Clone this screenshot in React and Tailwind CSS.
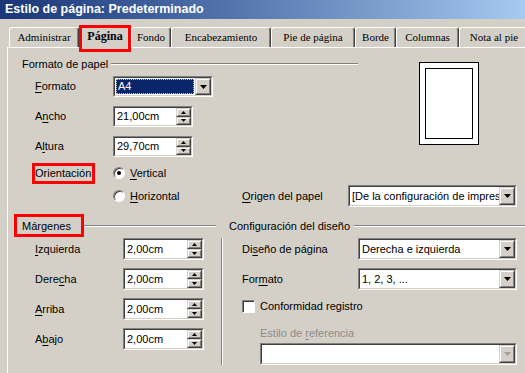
import React from 'react';

const tabs = [
  { label: 'Administrar', w: 70 },
  { label: 'Página', w: 52, active: true },
  { label: 'Fondo', w: 40 },
  { label: 'Encabezamiento', w: 100 },
  { label: 'Pie de página', w: 84 },
  { label: 'Borde', w: 41 },
  { label: 'Columnas', w: 63 },
  { label: 'Nota al pie', w: 70 },
];

// sunken win2000 field
function Sunken({ className = '', children }) {
  return (
    <div className={`border border-t-[#808080] border-l-[#808080] border-b-white border-r-white ${className}`}>
      <div className="flex h-full w-full border border-t-[#404040] border-l-[#404040] border-b-[#d4d0c8] border-r-[#d4d0c8] bg-white">
        {children}
      </div>
    </div>
  );
}

function Raised({ className = '', children }) {
  return (
    <div className={`border border-t-[#d4d0c8] border-l-[#d4d0c8] border-b-[#404040] border-r-[#404040] ${className}`}>
      <div className="flex h-full w-full items-center justify-center border border-t-white border-l-white border-b-[#808080] border-r-[#808080] bg-[#d4d0c8]">
        {children}
      </div>
    </div>
  );
}

function Arrow({ disabled }) {
  return (
    <Raised className="h-full w-[16px] shrink-0">
      <svg width="7" height="4" viewBox="0 0 7 4">
        <path d="M0 0h7L3.5 4z" fill={disabled ? '#a0a0a0' : '#000'} />
      </svg>
    </Raised>
  );
}

function Spin({ value, className = '' }) {
  return (
    <Sunken className={className}>
      <div className="flex flex-1 items-center pl-[2px]">{value}</div>
      <div className="flex w-[15px] shrink-0 flex-col">
        <Raised className="flex-1">
          <svg width="5" height="3" viewBox="0 0 5 3"><path d="M2.5 0L5 3H0z" fill="#000" /></svg>
        </Raised>
        <Raised className="flex-1">
          <svg width="5" height="3" viewBox="0 0 5 3"><path d="M0 0h5L2.5 3z" fill="#000" /></svg>
        </Raised>
      </div>
    </Sunken>
  );
}

function Select({ value, className = '', disabled }) {
  return (
    <Sunken className={className}>
      <div className="flex flex-1 items-center overflow-hidden whitespace-nowrap pl-[2px]">{value}</div>
      <Arrow disabled={disabled} />
    </Sunken>
  );
}

function Radio({ checked }) {
  return (
    <span className="flex h-[12px] w-[12px] shrink-0 items-center justify-center rounded-full border border-t-[#808080] border-l-[#808080] border-b-white border-r-white bg-white shadow-[inset_1px_1px_#404040]">
      {checked && <span className="h-[4px] w-[4px] rounded-full bg-black" />}
    </span>
  );
}

function Line({ className = '' }) {
  return <div className={`h-[2px] flex-1 border-t border-b border-t-[#808080] border-b-white ${className}`} />;
}

function U({ children }) {
  return <span className="underline underline-offset-[2px]">{children}</span>;
}

export default function App() {
  return (
    <div className="flex h-[373px] w-[525px] flex-col overflow-hidden bg-[#d4d0c8] text-[11px] leading-[13px] text-black font-['Liberation_Sans',Arial,sans-serif]">
      {/* title bar */}
      <div className="flex h-[19px] shrink-0 items-center bg-gradient-to-r from-[#1a3578] to-[#a6caf0] pl-[5px] text-[12.5px] font-bold text-white">
        Estilo de página: Predeterminado
      </div>

      {/* tabs */}
      <div className="flex h-[28px] shrink-0 items-end pl-[9px] font-['Liberation_Serif','Times_New_Roman',serif] text-[11px]">
        {tabs.map((t) =>
          t.active ? (
            <div
              key={t.label}
              style={{ width: t.w }}
              className="relative z-10 -mb-px flex h-[23px] shrink-0 items-center justify-center rounded-t-[3px] border-t border-l border-r border-t-white border-l-white border-r-[#404040] bg-[#d4d0c8] pb-[2px] text-[12px] font-bold"
            >
              {t.label}
              <span className="absolute -left-[1px] -right-[1px] -top-[1px] -bottom-[4px] border-[3px] border-[#ff0000]" />
            </div>
          ) : (
            <div
              key={t.label}
              style={{ width: t.w }}
              className="flex h-[20px] shrink-0 items-center justify-center rounded-t-[3px] border-t border-l border-r border-t-white border-l-white border-r-[#404040] shadow-[inset_-1px_0_#808080]"
            >
              {t.label}
            </div>
          )
        )}
      </div>

      {/* panel */}
      <div className="ml-[7px] flex-1 border-l border-t border-white">
        <div className="flex">
          <div className="w-[350px] pt-[8px]">
            <div className="flex h-[16px] items-center pl-[14px]">
              <span>Formato de papel</span>
              <Line className="ml-[3px]" />
            </div>
            <div className="mt-[4px] flex h-[21px] items-center pl-[27px]">
              <span className="w-[78px]"><U>F</U>ormato</span>
              <Sunken className="h-[21px] w-[100px]">
                <div className="flex flex-1 p-[1px]">
                  <div className="flex flex-1 items-center border border-dotted border-[#c0c0c0] bg-[#0a246a] pl-[1px] text-white">A4</div>
                </div>
                <Arrow />
              </Sunken>
            </div>
            <div className="mt-[9px] flex h-[21px] items-center pl-[27px]">
              <span className="w-[78px]">A<U>n</U>cho</span>
              <Spin value="21,00cm" className="h-[21px] w-[80px]" />
            </div>
            <div className="mt-[9px] flex h-[21px] items-center pl-[27px]">
              <span className="w-[78px]">A<U>l</U>tura</span>
              <Spin value="29,70cm" className="h-[21px] w-[80px]" />
            </div>
            <div className="mt-[6px] flex h-[20px] items-center pl-[27px]">
              <span className="w-[78px]">
                <span className="relative inline-block">
                  Orientación
                  <span className="absolute -left-[3px] -right-[4px] -top-[4px] -bottom-[4px] border-[3px] border-[#ff0000]" />
                </span>
              </span>
              <Radio checked />
              <span className="ml-[5px]"><U>V</U>ertical</span>
            </div>
          </div>
          <div className="ml-[61px] mt-[14px]">
            <div className="h-[83px] w-[60px] border border-black bg-white p-[5px]">
              <div className="h-full w-full border border-black" />
            </div>
          </div>
        </div>

        <div className="mt-[2px] flex h-[22px] items-center pl-[27px]">
          <span className="w-[78px]" />
          <div className="flex w-[129px] items-center">
            <Radio />
            <span className="ml-[5px]"><U>H</U>orizontal</span>
          </div>
          <span className="w-[106px]"><U>O</U>rigen del papel</span>
          <Select value="[De la configuración de impresora]" className="h-[22px] w-[169px]" />
        </div>

        <div className="mt-[11px] flex">
          {/* margins */}
          <div className="w-[208px]">
            <div className="flex h-[16px] items-center pl-[14px]">
              <span className="relative">
                Márgenes
                <span className="absolute -left-[8px] -right-[13px] -top-[6px] -bottom-[4px] border-[3px] border-[#ff0000]" />
              </span>
              <Line className="ml-[13px]" />
            </div>
            {[
              [<><U>I</U>zquierda</>, 4],
              [<>Dere<U>c</U>ha</>, 8],
              [<><U>A</U>rriba</>, 8],
              [<>A<U>b</U>ajo</>, 8],
            ].map(([label, mt], i) => (
              <div key={i} className={`flex h-[22px] items-center pl-[27px] ${mt === 4 ? 'mt-[4px]' : 'mt-[8px]'}`}>
                <span className="w-[88px]">{label}</span>
                <Spin value="2,00cm" className="h-[22px] w-[81px]" />
              </div>
            ))}
          </div>

          <div className="w-[13px] pt-[20px]">
            <div className="ml-[5px] h-[127px] w-[2px] border-l border-r border-l-[#808080] border-r-white" />
          </div>

          {/* layout settings */}
          <div className="flex-1">
            <div className="flex h-[16px] items-center">
              <span>Configuración del diseño</span>
              <Line className="ml-[4px]" />
            </div>
            <div className="mt-[4px] flex h-[22px] items-center pl-[13px]">
              <span className="w-[116px]">Di<U>s</U>eño de página</span>
              <Select value="Derecha e izquierda" className="h-[22px] w-[159px]" />
            </div>
            <div className="mt-[8px] flex h-[22px] items-center pl-[13px]">
              <span className="w-[116px]">For<U>m</U>ato</span>
              <Select value="1, 2, 3, ..." className="h-[22px] w-[159px]" />
            </div>
            <div className="mt-[10px] flex h-[13px] items-center pl-[13px]">
              <span className="h-[13px] w-[13px] border border-t-[#808080] border-l-[#808080] border-b-white border-r-white bg-white shadow-[inset_1px_1px_#404040]" />
              <span className="ml-[5px]">Conformidad registro</span>
            </div>
            <div className="mt-[14px] pl-[31px] text-[#8c8c8c]">
              Estilo de <U>r</U>eferencia
            </div>
            <div className="mt-[3px] pl-[31px]">
              <Select value="" disabled className="h-[22px] w-[257px]" />
            </div>
          </div>
        </div>
      </div>
    </div>
  );
}
